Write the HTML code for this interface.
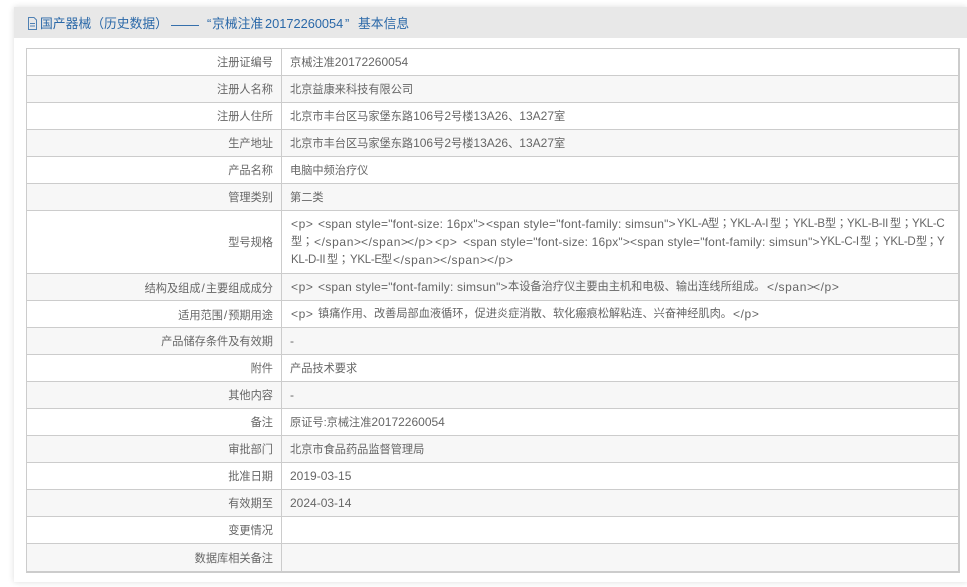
<!DOCTYPE html>
<html lang="zh"><head><meta charset="utf-8"><title>基本信息</title>
<style>
html,body{margin:0;padding:0;background:#fff;width:967px;height:587px;overflow:hidden}
body{font-family:"Liberation Sans","Noto Sans CJK SC",sans-serif;font-size:11.2px;color:#666}
i{font-style:normal;font-size:12px}
b{font-weight:normal;font-family:"Liberation Sans","Noto Sans CJK TC",sans-serif}
u{text-decoration:none;font-size:12px;margin:0 1px}
#panel{position:absolute;left:14px;top:7px;width:953px;height:575px;background:#fff;box-shadow:0 0 6px rgba(0,0,0,.14)}
#head{position:absolute;left:14px;top:7px;width:953px;height:31px;background:#e8e8e8}
.h{position:absolute;top:15px;height:18px;line-height:18px;font-size:12.8px;color:#2a68a8;white-space:nowrap}
#ico{position:absolute;left:27px;top:17px;opacity:.8}
#t{position:absolute;left:26px;top:48px;width:931px;height:522px;border:1px solid #ccc;border-right-width:2px;border-bottom-width:2px}
.r{position:absolute;left:0;width:931px;border-bottom:1px solid #ccc;box-sizing:border-box}
.e{background:#f7f7f7}
.a{position:absolute;left:0;top:0;bottom:0;width:254px;border-right:1px solid #ccc}
.k{position:absolute;right:685px;top:50%;margin-top:-8px;line-height:18px;white-space:nowrap}
.v{position:absolute;left:263px;top:50%;margin-top:-9px;line-height:18px;white-space:nowrap}
.c{margin-top:-8px}
.s{position:absolute;line-height:18px;white-space:nowrap}
.t{font-size:12px;letter-spacing:.18px}
.g{font-size:12px;letter-spacing:.6px}
.n{font-size:11.5px;letter-spacing:-.3px}
</style></head><body>
<div id="panel"></div><div id="head"></div>
<svg id="ico" width="11" height="13" viewBox="0 0 11 13" fill="none" stroke="#2a68a8"><path d="M1.500 .5H7L9.500 3V12.500H1.500Z M3 6.500H8 M3 9H8"/></svg>
<div class="h" style="left:40px">国产器械<b>（</b>历史数据<b>）</b></div>
<div class="h" style="left:171px;font-size:14px">——</div>
<div class="h" style="left:207px">“</div>
<div class="h" style="left:212px">京械注准</div>
<div class="h" style="left:265px">20172260054</div>
<div class="h" style="left:345px">”</div>
<div class="h" style="left:358px">基本信息</div>
<div id="t">
<div class="r" style="top:0;height:27px"><div class="a"></div><div class="k">注册证编号</div><div class="v">京械注准<i>20172260054</i></div></div>
<div class="r e" style="top:27px;height:27px"><div class="a"></div><div class="k">注册人名称</div><div class="v c">北京益康来科技有限公司</div></div>
<div class="r" style="top:54px;height:27px"><div class="a"></div><div class="k">注册人住所</div><div class="v">北京市丰台区马家堡东路<i>106</i>号<i>2</i>号楼<i>13A26</i>、<i>13A27</i>室</div></div>
<div class="r e" style="top:81px;height:27px"><div class="a"></div><div class="k">生产地址</div><div class="v">北京市丰台区马家堡东路<i>106</i>号<i>2</i>号楼<i>13A26</i>、<i>13A27</i>室</div></div>
<div class="r" style="top:108px;height:27px"><div class="a"></div><div class="k">产品名称</div><div class="v c">电脑中频治疗仪</div></div>
<div class="r e" style="top:135px;height:27px"><div class="a"></div><div class="k">管理类别</div><div class="v c">第二类</div></div>
<div class="r" style="top:162px;height:63px"><div class="a"></div><div class="k">型号规格</div></div>
<div class="r e" style="top:225px;height:27px"><div class="a"></div><div class="k">结构及组成<u>/</u>主要组成成分</div></div>
<div class="r" style="top:252px;height:27px"><div class="a"></div><div class="k">适用范围<u>/</u>预期用途</div></div>
<div class="r e" style="top:279px;height:27px"><div class="a"></div><div class="k">产品储存条件及有效期</div><div class="v"><i>-</i></div></div>
<div class="r" style="top:306px;height:27px"><div class="a"></div><div class="k">附件</div><div class="v c">产品技术要求</div></div>
<div class="r e" style="top:333px;height:27px"><div class="a"></div><div class="k">其他内容</div><div class="v"><i>-</i></div></div>
<div class="r" style="top:360px;height:27px"><div class="a"></div><div class="k">备注</div><div class="v">原证号:京械注准<i>20172260054</i></div></div>
<div class="r e" style="top:387px;height:27px"><div class="a"></div><div class="k">审批部门</div><div class="v c">北京市食品药品监督管理局</div></div>
<div class="r" style="top:414px;height:27px"><div class="a"></div><div class="k">批准日期</div><div class="v"><i>2019-03-15</i></div></div>
<div class="r e" style="top:441px;height:27px"><div class="a"></div><div class="k">有效期至</div><div class="v"><i>2024-03-14</i></div></div>
<div class="r" style="top:468px;height:27px"><div class="a"></div><div class="k">变更情况</div></div>
<div class="r e" style="top:495px;height:27px;border-bottom:0"><div class="a"></div><div class="k">数据库相关备注</div></div>
</div>

<span class="s g" style="left:291px;top:215px">&lt;p&gt;</span>
<span class="s t" style="left:318px;top:215px">&lt;span style="font-size: 16px"&gt;</span>
<span class="s t" style="left:486px;top:215px">&lt;span style="font-family: simsun"&gt;</span>
<span class="s n" style="left:677px;top:215px">YKL-A</span><span class="s" style="left:708px;top:215px">型</span><span class="s" style="left:719px;top:215px"><b>；</b></span>
<span class="s n" style="left:730px;top:215px">YKL-A-I</span><span class="s" style="left:770px;top:215px">型</span><span class="s" style="left:781px;top:215px"><b>；</b></span>
<span class="s n" style="left:793px;top:215px">YKL-B</span><span class="s" style="left:825px;top:215px">型</span><span class="s" style="left:836px;top:215px"><b>；</b></span>
<span class="s n" style="left:847px;top:215px">YKL-B-II</span><span class="s" style="left:890px;top:215px">型</span><span class="s" style="left:901px;top:215px"><b>；</b></span>
<span class="s n" style="left:912px;top:215px">YKL-C</span>

<span class="s" style="left:291px;top:233px">型</span><span class="s" style="left:302px;top:233px"><b>；</b></span>
<span class="s g" style="left:314px;top:233px">&lt;/span&gt;</span>
<span class="s g" style="left:361px;top:233px">&lt;/span&gt;</span>
<span class="s g" style="left:407px;top:233px">&lt;/p&gt;</span>
<span class="s g" style="left:435px;top:233px">&lt;p&gt;</span>
<span class="s t" style="left:463px;top:233px">&lt;span style="font-size: 16px"&gt;</span>
<span class="s t" style="left:630px;top:233px">&lt;span style="font-family: simsun"&gt;</span>
<span class="s n" style="left:820px;top:233px">YKL-C-I</span><span class="s" style="left:860px;top:233px">型</span><span class="s" style="left:871px;top:233px"><b>；</b></span>
<span class="s n" style="left:883px;top:233px">YKL-D</span><span class="s" style="left:916px;top:233px">型</span><span class="s" style="left:926px;top:233px"><b>；</b></span>
<span class="s n" style="left:937px;top:233px">Y</span>

<span class="s n" style="left:291px;top:251px">KL-D-II</span><span class="s" style="left:327px;top:251px">型</span><span class="s" style="left:338px;top:251px"><b>；</b></span>
<span class="s n" style="left:350px;top:251px">YKL-E</span><span class="s" style="left:381px;top:251px">型</span>
<span class="s g" style="left:393px;top:251px">&lt;/span&gt;</span>
<span class="s g" style="left:440px;top:251px">&lt;/span&gt;</span>
<span class="s g" style="left:487px;top:251px">&lt;/p&gt;</span>

<span class="s g" style="left:291px;top:278px">&lt;p&gt;</span>
<span class="s t" style="left:318px;top:278px">&lt;span style="font-family: simsun"&gt;</span>
<span class="s" style="left:508px;top:278px">本设备治疗仪主要由主机和电极、输出连线所组成。</span>
<span class="s g" style="left:767px;top:278px">&lt;/span&gt;</span>
<span class="s g" style="left:813px;top:278px">&lt;/p&gt;</span>

<span class="s g" style="left:291px;top:305px">&lt;p&gt;</span>
<span class="s" style="left:318px;top:305px">镇痛作用、改善局部血液循环<b>，</b>促进炎症消散、软化瘢痕松解粘连、兴奋神经肌肉。</span>
<span class="s g" style="left:733px;top:305px">&lt;/p&gt;</span>
</body></html>
